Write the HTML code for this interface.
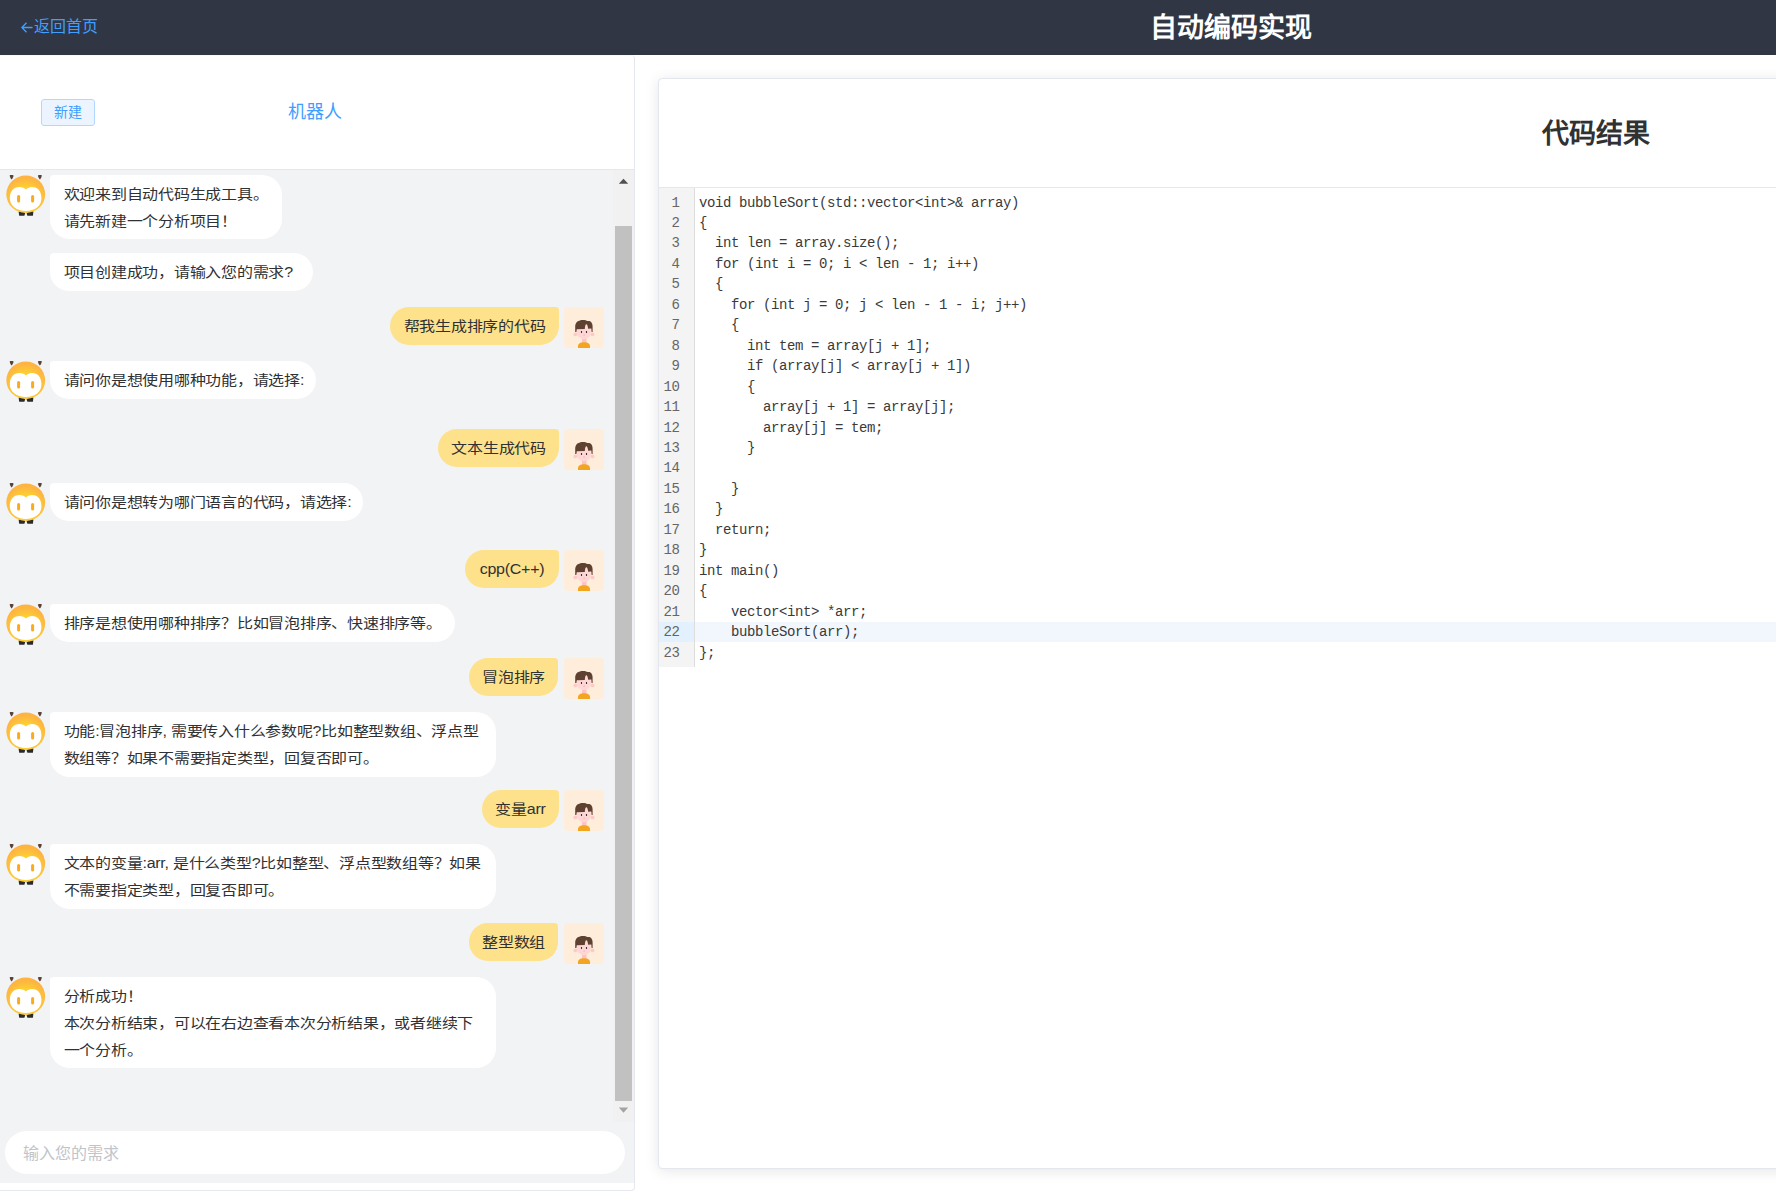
<!DOCTYPE html>
<html lang="zh-CN">
<head>
<meta charset="utf-8">
<style>
*{margin:0;padding:0;box-sizing:border-box;}
html,body{width:1776px;height:1196px;overflow:hidden;background:#fff;font-family:"Liberation Sans",sans-serif;}
.abs{position:absolute;}
#hdr{position:absolute;left:0;top:0;width:1776px;height:55px;background:#313644;}
#back{position:absolute;left:34px;top:17px;font-size:16px;line-height:20px;color:#409eff;white-space:nowrap;}
#title{position:absolute;left:1149.5px;top:11.8px;font-size:27px;line-height:32px;font-weight:bold;color:#fff;white-space:nowrap;}
#lcard{position:absolute;left:0;top:55px;width:635px;height:1136px;border:1px solid #e4e7ed;border-top:1px solid #f7f8fa;border-left:none;border-radius:0 4px 4px 0;background:#fff;overflow:hidden;}
#ltop{position:absolute;left:0;top:-1px;width:634px;height:115px;border-bottom:1px solid #e4e7ed;background:#fff;}
#newbtn{position:absolute;left:41px;top:44px;width:54px;height:27px;border:1px solid #b3d8ff;background:#ecf5ff;border-radius:3px;color:#409eff;font-size:14px;line-height:25px;text-align:center;}
#robot{position:absolute;left:288px;top:45px;font-size:18px;line-height:24px;color:#409eff;white-space:nowrap;}
#chat{position:absolute;left:0;top:114px;width:634px;height:1013px;background:#f2f3f5;}
#track{position:absolute;left:613px;top:114px;width:21px;height:952px;background:#f1f1f1;}
#thumb{position:absolute;left:615px;top:170px;width:17px;height:875px;background:#c1c1c1;}
.bub{position:absolute;background:#fff;border-radius:4px 20px 20px 20px;padding:6px 0 0 13.7px;font-size:16px;letter-spacing:-0.25px;line-height:27px;color:#303133;white-space:nowrap;}
.tl{height:27px;transform:scaleY(0.88);transform-origin:50% 52%;}
.ub{background:#fde18b;border-radius:20px 4px 20px 20px;padding:6px 0 0 0;}
.av{position:absolute;width:40px;height:40px;}
#input{position:absolute;left:5px;top:1075px;width:620px;height:43px;border-radius:22px;background:#fff;}
#ph{position:absolute;left:17.5px;top:11.5px;font-size:16px;line-height:22px;color:#c0c4cc;white-space:nowrap;}
#rcard{position:absolute;left:658px;top:78px;width:1300px;height:1091px;border:1px solid #e4e7ed;border-radius:4px;background:#fff;box-shadow:0 2px 14px 0 rgba(0,0,0,.1);}
#rhead{position:absolute;left:0;top:0;width:100%;height:109px;border-bottom:1px solid #e4e7ed;}
#rtitle{position:absolute;left:883px;top:38px;font-size:27px;line-height:34px;font-weight:bold;color:#303133;white-space:nowrap;}
#gutter{position:absolute;left:0;top:109px;width:36px;height:479px;background:#f4f4f4;border-right:1px solid #ddd;}
#actg{position:absolute;left:0;top:542.8px;width:35px;height:20.2px;background:#e2f1fd;}
#actc{position:absolute;left:36px;top:542.8px;width:1300px;height:20.2px;background:#f2f7fe;}
.ln{position:absolute;left:0;width:20.5px;text-align:right;font-family:"Liberation Mono",monospace;font-size:14px;letter-spacing:-0.4px;color:#666;}
#code{position:absolute;left:40px;top:113.5px;}
.cl{position:absolute;left:0;height:20.457px;line-height:20.457px;font-family:"Liberation Mono",monospace;font-size:14px;letter-spacing:-0.4px;color:#3a3a3a;white-space:pre;}
</style>
</head>
<body>
<svg width="0" height="0" style="position:absolute">
<defs>
<symbol id="bot" viewBox="0 0 40 41">
  <defs><radialGradient id="bg1" cx="0.5" cy="0.62" r="0.55"><stop offset="0.55" stop-color="#fdd02f"/><stop offset="1" stop-color="#fdb443"/></radialGradient></defs>
  <path d="M3.7 0.2 C4.8 0 6.6 0 7.6 0.4 C7.4 2 6.5 3.6 5.6 4.4 C4.7 3.6 3.8 2 3.7 0.2 Z" fill="#5a4336"/>
  <path d="M31.9 0.4 C32.9 0 34.7 0 35.8 0.2 C35.7 2 34.8 3.6 33.9 4.4 C33 3.6 32.1 2 31.9 0.4 Z" fill="#5a4336"/>
  <path d="M12.6 36.6 C14.8 35.8 17.4 36.6 19.2 38.2 L18.4 40.8 L13.2 40.8 Z" fill="#2b2b2b"/>
  <path d="M20.6 38.2 C22.4 36.6 25 35.8 27.4 36.6 L26.9 40.8 L21.4 40.8 Z" fill="#2b2b2b"/>
  <ellipse cx="19.75" cy="19.3" rx="19.4" ry="18.7" fill="url(#bg1)"/>
  <path d="M19.9 14.6 C16.5 10.6 4.5 10.3 3.8 22.5 C3.5 31 11 35.9 19.8 35.9 C28.6 35.9 36 31 35.4 22.5 C34.8 10.3 23.3 10.6 19.9 14.6 Z" fill="#fff"/>
  <rect x="11.1" y="20" width="3" height="7.4" rx="1.5" fill="#f9ab1b"/>
  <rect x="25.1" y="20" width="3" height="7.4" rx="1.5" fill="#f9ab1b"/>
</symbol>
<symbol id="usr" viewBox="0 0 40 41">
  <rect x="0" y="0" width="40" height="41" rx="4" fill="#feeddb"/>
  <circle cx="11.3" cy="27.4" r="1.9" fill="#ffc9c9"/>
  <circle cx="28.6" cy="27.4" r="1.9" fill="#ffc9c9"/>
  <rect x="18" y="30" width="4.5" height="7" fill="#ffc2c2"/>
  <path d="M14 41 L14 39 C14 36.5 16.5 35.2 20 35.2 C23.5 35.2 26 36.5 26 39 L26 41 Z" fill="#f4a520"/>
  <ellipse cx="19.9" cy="25" rx="7.2" ry="7.2" fill="#ffd6d6"/>
  <path d="M11.2 25 L11.2 19.5 C11.2 15 14.5 12.9 19 12.9 C21 12.9 22.5 13.3 23.5 14 C26 13.4 28.6 15 28.6 19.5 L28.6 25 L27.6 25 L27.3 21.5 L24.2 21.8 C23.8 19 23.2 17.3 22.2 17.3 C21.3 17.3 21 20 20.8 22 L12.8 22.3 L12.4 25 Z" fill="#5f4131"/>
  <ellipse cx="17.5" cy="25" rx="0.65" ry="1.1" fill="#222"/>
  <ellipse cx="22.5" cy="25" rx="0.65" ry="1.1" fill="#222"/>
  <ellipse cx="20.1" cy="28" rx="0.9" ry="0.45" fill="#f09a8a"/>
</symbol>
</defs>
</svg>

<div id="hdr">
  <svg style="position:absolute;left:21px;top:22px" width="12" height="11" viewBox="0 0 12 11"><path d="M5.5 0.7 L0.9 5.5 L5.5 10.3 M0.9 5.5 L11.5 5.5" stroke="#409eff" stroke-width="1.3" fill="none"/></svg><div id="back">返回首页</div>
  <div id="title">自动编码实现</div>
</div>

<div id="lcard">
  <div id="ltop">
    <div id="newbtn">新建</div>
    <div id="robot">机器人</div>
  </div>
  <div id="chat"></div>
  <div id="track"></div>
  <div id="thumb"></div>
  <svg style="position:absolute;left:618px;top:122px" width="11" height="6" viewBox="0 0 11 6"><path d="M0.8 5.7 L5.5 0.7 L10.2 5.7 Z" fill="#505050"/></svg>
  <svg style="position:absolute;left:618px;top:1051px" width="11" height="6" viewBox="0 0 11 6"><path d="M0.8 0.6 L10.2 0.6 L5.5 5.7 Z" fill="#a3a3a3"/></svg>
  <div id="input"><div id="ph">输入您的需求</div></div>
</div>

<div id="msgs">
<svg class="av" style="left:6px;top:175px;width:40px;height:41px"><use href="#bot"/></svg>
<div class="bub" style="left:50px;top:175px;width:232px;height:64px"><div class="tl">欢迎来到自动代码生成工具。</div><div class="tl">请先新建一个分析项目！</div></div>
<div class="bub" style="left:50px;top:253px;width:263px;height:38px"><div class="tl">项目创建成功，请输入您的需求?</div></div>
<svg class="av" style="left:6px;top:361px;width:40px;height:41px"><use href="#bot"/></svg>
<div class="bub" style="left:50px;top:361px;width:266px;height:38px"><div class="tl">请问你是想使用哪种功能，请选择:</div></div>
<svg class="av" style="left:6px;top:483px;width:40px;height:41px"><use href="#bot"/></svg>
<div class="bub" style="left:50px;top:483px;width:313px;height:38px"><div class="tl">请问你是想转为哪门语言的代码，请选择:</div></div>
<svg class="av" style="left:6px;top:604px;width:40px;height:41px"><use href="#bot"/></svg>
<div class="bub" style="left:50px;top:604px;width:405px;height:38px"><div class="tl">排序是想使用哪种排序？比如冒泡排序、快速排序等。</div></div>
<svg class="av" style="left:6px;top:712px;width:40px;height:41px"><use href="#bot"/></svg>
<div class="bub" style="left:50px;top:712px;width:446px;height:65px"><div class="tl">功能:冒泡排序, 需要传入什么参数呢?比如整型数组、浮点型</div><div class="tl">数组等？如果不需要指定类型，回复否即可。</div></div>
<svg class="av" style="left:6px;top:844px;width:40px;height:41px"><use href="#bot"/></svg>
<div class="bub" style="left:50px;top:844px;width:446px;height:65px"><div class="tl">文本的变量:arr, 是什么类型?比如整型、浮点型数组等？如果</div><div class="tl">不需要指定类型，回复否即可。</div></div>
<svg class="av" style="left:6px;top:977px;width:40px;height:41px"><use href="#bot"/></svg>
<div class="bub" style="left:50px;top:977px;width:446px;height:91px"><div class="tl">分析成功！</div><div class="tl">本次分析结束，可以在右边查看本次分析结果，或者继续下</div><div class="tl">一个分析。</div></div>
<svg class="av" style="left:564px;top:307px;width:40px;height:41px"><use href="#usr"/></svg>
<div class="bub ub" style="left:390px;top:307px;width:169px;height:38px;text-align:center"><div class="tl">帮我生成排序的代码</div></div>
<svg class="av" style="left:564px;top:429px;width:40px;height:41px"><use href="#usr"/></svg>
<div class="bub ub" style="left:438px;top:429px;width:121px;height:38px;text-align:center"><div class="tl">文本生成代码</div></div>
<svg class="av" style="left:564px;top:550px;width:40px;height:41px"><use href="#usr"/></svg>
<div class="bub ub" style="left:465px;top:550px;width:94px;height:38px;text-align:center"><div class="tl">cpp(C++)</div></div>
<svg class="av" style="left:564px;top:658px;width:40px;height:41px"><use href="#usr"/></svg>
<div class="bub ub" style="left:469px;top:658px;width:89px;height:38px;text-align:center"><div class="tl">冒泡排序</div></div>
<svg class="av" style="left:564px;top:790px;width:40px;height:41px"><use href="#usr"/></svg>
<div class="bub ub" style="left:482px;top:790px;width:77px;height:38px;text-align:center"><div class="tl">变量arr</div></div>
<svg class="av" style="left:564px;top:923px;width:40px;height:41px"><use href="#usr"/></svg>
<div class="bub ub" style="left:469px;top:923px;width:89px;height:38px;text-align:center"><div class="tl">整型数组</div></div>
</div>

<div id="rcard">
  <div id="rhead"><div id="rtitle">代码结果</div></div>
  <div id="gutter"></div><div id="actg"></div><div id="actc"></div>
<div class="ln" style="top:113.500px;height:20.457px;line-height:20.457px">1</div>
<div class="ln" style="top:133.957px;height:20.457px;line-height:20.457px">2</div>
<div class="ln" style="top:154.414px;height:20.457px;line-height:20.457px">3</div>
<div class="ln" style="top:174.871px;height:20.457px;line-height:20.457px">4</div>
<div class="ln" style="top:195.328px;height:20.457px;line-height:20.457px">5</div>
<div class="ln" style="top:215.785px;height:20.457px;line-height:20.457px">6</div>
<div class="ln" style="top:236.242px;height:20.457px;line-height:20.457px">7</div>
<div class="ln" style="top:256.699px;height:20.457px;line-height:20.457px">8</div>
<div class="ln" style="top:277.156px;height:20.457px;line-height:20.457px">9</div>
<div class="ln" style="top:297.613px;height:20.457px;line-height:20.457px">10</div>
<div class="ln" style="top:318.070px;height:20.457px;line-height:20.457px">11</div>
<div class="ln" style="top:338.527px;height:20.457px;line-height:20.457px">12</div>
<div class="ln" style="top:358.984px;height:20.457px;line-height:20.457px">13</div>
<div class="ln" style="top:379.441px;height:20.457px;line-height:20.457px">14</div>
<div class="ln" style="top:399.898px;height:20.457px;line-height:20.457px">15</div>
<div class="ln" style="top:420.355px;height:20.457px;line-height:20.457px">16</div>
<div class="ln" style="top:440.812px;height:20.457px;line-height:20.457px">17</div>
<div class="ln" style="top:461.269px;height:20.457px;line-height:20.457px">18</div>
<div class="ln" style="top:481.726px;height:20.457px;line-height:20.457px">19</div>
<div class="ln" style="top:502.183px;height:20.457px;line-height:20.457px">20</div>
<div class="ln" style="top:522.640px;height:20.457px;line-height:20.457px">21</div>
<div class="ln" style="top:543.097px;height:20.457px;line-height:20.457px">22</div>
<div class="ln" style="top:563.554px;height:20.457px;line-height:20.457px">23</div>
  <div id="code"><div class="cl" style="top:0.000px">void bubbleSort(std::vector&lt;int&gt;&amp; array)</div><div class="cl" style="top:20.457px">{</div><div class="cl" style="top:40.914px">  int len = array.size();</div><div class="cl" style="top:61.371px">  for (int i = 0; i &lt; len - 1; i++)</div><div class="cl" style="top:81.828px">  {</div><div class="cl" style="top:102.285px">    for (int j = 0; j &lt; len - 1 - i; j++)</div><div class="cl" style="top:122.742px">    {</div><div class="cl" style="top:143.199px">      int tem = array[j + 1];</div><div class="cl" style="top:163.656px">      if (array[j] &lt; array[j + 1])</div><div class="cl" style="top:184.113px">      {</div><div class="cl" style="top:204.570px">        array[j + 1] = array[j];</div><div class="cl" style="top:225.027px">        array[j] = tem;</div><div class="cl" style="top:245.484px">      }</div><div class="cl" style="top:265.941px"></div><div class="cl" style="top:286.398px">    }</div><div class="cl" style="top:306.855px">  }</div><div class="cl" style="top:327.312px">  return;</div><div class="cl" style="top:347.769px">}</div><div class="cl" style="top:368.226px">int main()</div><div class="cl" style="top:388.683px">{</div><div class="cl" style="top:409.140px">    vector&lt;int&gt; *arr;</div><div class="cl" style="top:429.597px">    bubbleSort(arr);</div><div class="cl" style="top:450.054px">};</div></div>
</div>
</body>
</html>
